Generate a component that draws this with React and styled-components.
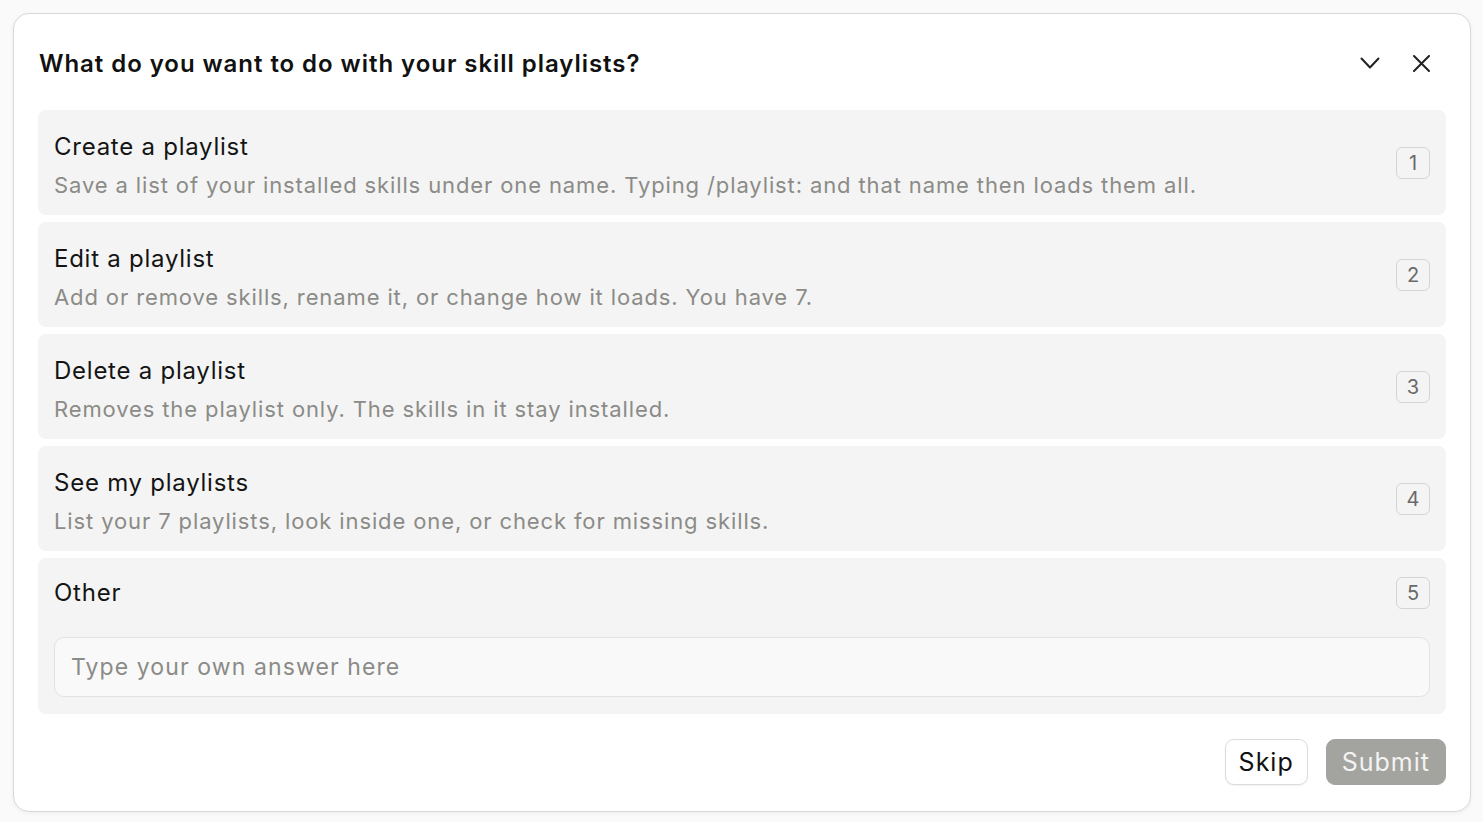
import React from 'react';
import styled, { createGlobalStyle } from 'styled-components';

const GlobalStyle = createGlobalStyle`
  html, body {
    margin: 0;
    padding: 0;
    background: #fafafa;
    font-family: Inter, "Noto Sans", "Liberation Sans", sans-serif;
    -webkit-font-smoothing: antialiased;
  }
  * { box-sizing: border-box; }
`;

const Page = styled.div`
  padding: 13px 12px 10px 13px;
`;

const Card = styled.div`
  background: #fff;
  border: 1px solid #d9d9d9;
  border-radius: 16px;
  box-shadow: 0 1px 4px rgba(0, 0, 0, 0.06);
  padding: 24px 24px 26px 24px;
  display: flex;
  flex-direction: column;
`;

const Header = styled.div`
  display: flex;
  align-items: center;
  justify-content: space-between;
  height: 50px;
  margin-bottom: 22px;
`;

const Title = styled.h1`
  margin: 0 0 0 1px;
  font-size: 24px;
  font-weight: 600;
  color: #111;
  letter-spacing: 0.95px;
`;

const HeaderActions = styled.div`
  display: flex;
  align-items: center;
  gap: 33px;
  margin-right: 16px;
`;

const IconButton = styled.button`
  border: none;
  background: none;
  padding: 0;
  display: flex;
  cursor: pointer;
  color: #222;
`;

const Options = styled.div`
  display: flex;
  flex-direction: column;
  gap: 7px;
`;

const Option = styled.div`
  background: #f4f4f4;
  border-radius: 8px;
  padding: ${(p) => (p.$other ? '19px 16px 17px 16px' : '21px 16px 15px 16px')};
  display: flex;
  flex-direction: column;
  cursor: pointer;
`;

const OptionTop = styled.div`
  display: flex;
  align-items: center;
  justify-content: space-between;
  gap: 16px;
`;

const OptionText = styled.div`
  display: flex;
  flex-direction: column;
  gap: 7px;
`;

const OptionTitle = styled.div`
  font-size: 24px;
  line-height: 32px;
  color: #141414;
  letter-spacing: 0.75px;
`;

const OptionDesc = styled.div`
  font-size: 22px;
  line-height: 30px;
  color: #8b8b87;
  letter-spacing: 0.88px;
`;

const Badge = styled.span`
  flex: none;
  width: 34px;
  height: 32px;
  margin-bottom: ${(p) => (p.$lift ? '6px' : '0')};
  border: 1px solid #d4d4d4;
  border-radius: 6px;
  display: flex;
  align-items: center;
  justify-content: center;
  font-size: 20px;
  color: #6a6a6a;
`;

const AnswerInput = styled.input`
  margin-top: 28px;
  height: 60px;
  width: 100%;
  border: 1px solid #e2e2e2;
  border-radius: 10px;
  background: #f9f9f9;
  padding: 0 16px;
  font-family: inherit;
  font-size: 23px;
  letter-spacing: 1.1px;
  color: #222;
  outline: none;
  &::placeholder {
    color: #8b8b87;
  }
`;

const Footer = styled.div`
  display: flex;
  justify-content: flex-end;
  gap: 18px;
  margin-top: 25px;
`;

const Button = styled.button`
  height: 46px;
  padding: ${(p) => (p.$primary ? '0 15px' : '0 13px')};
  border-radius: 9px;
  font-family: inherit;
  font-size: 25px;
  letter-spacing: 1px;
  cursor: pointer;
  border: 1px solid ${(p) => (p.$primary ? '#a3a3a0' : '#dcdcdc')};
  background: ${(p) => (p.$primary ? '#a3a3a0' : '#fff')};
  color: ${(p) => (p.$primary ? '#f3f3f1' : '#111')};
  box-shadow: ${(p) => (p.$primary ? 'none' : '0 1px 2px rgba(0,0,0,0.06)')};
`;

const options = [
  {
    title: 'Create a playlist',
    desc: 'Save a list of your installed skills under one name. Typing /playlist: and that name then loads them all.',
  },
  {
    title: 'Edit a playlist',
    desc: 'Add or remove skills, rename it, or change how it loads. You have 7.',
  },
  {
    title: 'Delete a playlist',
    desc: 'Removes the playlist only. The skills in it stay installed.',
  },
  {
    title: 'See my playlists',
    desc: 'List your 7 playlists, look inside one, or check for missing skills.',
  },
];

const ChevronIcon = () => (
  <svg width="20" height="12" viewBox="0 0 20 12" fill="none">
    <path d="M1.5 1.5 10 10.5 18.5 1.5" stroke="currentColor" strokeWidth="2" strokeLinecap="round" strokeLinejoin="round" />
  </svg>
);

const CloseIcon = () => (
  <svg width="17" height="17" viewBox="0 0 17 17" fill="none">
    <path d="M1 1 16 16M16 1 1 16" stroke="currentColor" strokeWidth="2" strokeLinecap="round" />
  </svg>
);

const App = () => {
  return (
    <>
      <GlobalStyle />
      <Page>
        <Card>
          <Header>
            <Title>What do you want to do with your skill playlists?</Title>
            <HeaderActions>
              <IconButton aria-label="Collapse">
                <ChevronIcon />
              </IconButton>
              <IconButton aria-label="Close">
                <CloseIcon />
              </IconButton>
            </HeaderActions>
          </Header>
          <Options>
            {options.map((o, i) => (
              <Option key={o.title}>
                <OptionTop>
                  <OptionText>
                    <OptionTitle>{o.title}</OptionTitle>
                    <OptionDesc>{o.desc}</OptionDesc>
                  </OptionText>
                  <Badge $lift>{i + 1}</Badge>
                </OptionTop>
              </Option>
            ))}
            <Option $other>
              <OptionTop>
                <OptionTitle>Other</OptionTitle>
                <Badge>5</Badge>
              </OptionTop>
              <AnswerInput placeholder="Type your own answer here" />
            </Option>
          </Options>
          <Footer>
            <Button>Skip</Button>
            <Button $primary>Submit</Button>
          </Footer>
        </Card>
      </Page>
    </>
  );
};

export default App;
